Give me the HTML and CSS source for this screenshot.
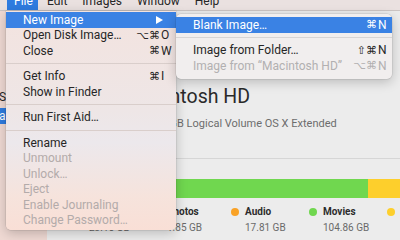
FILE: index.html
```html
<!DOCTYPE html>
<html lang="en">
<head>
    <meta charset="utf-8">
    <link rel="stylesheet" href="styles.css">
</head>
<body>
<div class="screen">
    <div class="menubar">
        <span class="on">File</span>
        <span>Edit</span>
        <span>Images</span>
        <span>Window</span>
        <span>Help</span>
    </div>
    <div class="window">
        <div class="sidebar">
            <div class="side-item">Si</div>
            <div class="side-item sel">a</div>
        </div>
        <div class="pane">
            <div class="head">
                <div class="disk-icon"></div>
                <div class="head-text">
                    <h1>Macintosh HD</h1>
                    <p>500.07 GB Logical Volume OS X Extended</p>
                </div>
            </div>
            <div class="rule"></div>
            <div class="bar">
                <div class="seg blue" style="width:40px"></div>
                <div class="seg orange" style="width:30px"></div>
                <div class="seg green" style="width:223px"></div>
                <div class="seg yellow" style="width:60px"></div>
            </div>
            <div class="legend">
                <div class="item">
                    <i class="dot blue"></i>
                    <div><b>Apps</b><span>23.15 GB</span></div>
                </div>
                <div class="item">
                    <i class="dot orange"></i>
                    <div><b>Photos</b><span>1.85 GB</span></div>
                </div>
                <div class="item">
                    <i class="dot orange"></i>
                    <div><b>Audio</b><span>17.81 GB</span></div>
                </div>
                <div class="item">
                    <i class="dot green"></i>
                    <div><b>Movies</b><span>104.86 GB</span></div>
                </div>
                <div class="item">
                    <i class="dot yellow"></i>
                    <div><b>Other</b><span>90.12 GB</span></div>
                </div>
            </div>
        </div>
    </div>

    <!-- File menu -->
    <div class="menu file-menu">
        <div class="row hl"><span class="label">New Image</span><i class="arrow"></i></div>
        <div class="row"><span class="label">Open Disk Image&hellip;</span><span class="mods">&#x2325;&#x2318;</span><span class="key">O</span></div>
        <div class="row"><span class="label">Close</span><span class="mods">&#x2318;</span><span class="key">W</span></div>
        <div class="sep"></div>
        <div class="row"><span class="label">Get Info</span><span class="mods">&#x2318;</span><span class="key">I</span></div>
        <div class="row"><span class="label">Show in Finder</span></div>
        <div class="sep"></div>
        <div class="row"><span class="label">Run First Aid&hellip;</span></div>
        <div class="sep"></div>
        <div class="row"><span class="label">Rename</span></div>
        <div class="row off"><span class="label">Unmount</span></div>
        <div class="row off"><span class="label">Unlock&hellip;</span></div>
        <div class="row off"><span class="label">Eject</span></div>
        <div class="row off"><span class="label">Enable Journaling</span></div>
        <div class="row off"><span class="label">Change Password&hellip;</span></div>
    </div>

    <!-- New Image submenu -->
    <div class="menu sub-menu">
        <div class="row hl"><span class="label">Blank Image&hellip;</span><span class="mods">&#x2318;</span><span class="key">N</span></div>
        <div class="sep"></div>
        <div class="row"><span class="label">Image from Folder&hellip;</span><span class="mods">&#x21E7;&#x2318;</span><span class="key">N</span></div>
        <div class="row off"><span class="label">Image from &ldquo;Macintosh HD&rdquo;</span><span class="mods">&#x2325;&#x2318;</span><span class="key">N</span></div>
    </div>
</div>
</body>
</html>
```

FILE: styles.css
```css
* {
    margin: 0;
    padding: 0;
    box-sizing: border-box;
}
body {
    font-family: Roboto, "DejaVu Sans", sans-serif;
    color: #262626;
    background: #ececec;
}
.screen {
    position: relative;
    width: 400px;
    height: 240px;
    overflow: hidden;
}

/* menu bar */
.menubar {
    display: flex;
    gap: 15px;
    height: 11px;
    overflow: hidden;
    padding-left: 7px;
    background: #eae1e0;
    border-bottom: 1px solid #cbc4c3;
    font-size: 12px;
}
.menubar span {
    line-height: 11px;
    margin-top: -4px;
    padding-bottom: 4px;
}
.menubar span.on {
    width: 31px;
    margin-right: -6px;
    padding-left: 7px;
    background-color: #2f7ce0;
    color: #fff;
}

/* window behind */
.window {
    display: flex;
    height: 229px;
}
.sidebar {
    flex: none;
    width: 47px;
    padding-top: 78px;
    background: #efd9d3;
    font-size: 12px;
}
.side-item {
    height: 16px;
    line-height: 16px;
    margin-left: -1px;
    margin-bottom: 3px;
}
.side-item.sel {
    background-color: #2f7ce0;
    color: #fff;
}
.pane {
    flex: 1;
    min-width: 0;
    padding: 74px 0 0 28px;
    background: #ececec;
}
.head {
    display: flex;
    gap: 10px;
}
.disk-icon {
    width: 42px;
    height: 34px;
    background: #c8c8c8;
    border-radius: 4px;
}
.head h1 {
    font-size: 19.5px;
    font-weight: 400;
    line-height: 24px;
    color: #2a2a2a;
}
.head p {
    margin-top: 8px;
    padding-left: 6px;
    font-size: 11px;
    line-height: 14px;
    color: #6d6d6d;
}
.rule {
    height: 1px;
    margin-top: 27px;
    background: #d6d6d6;
}
.bar {
    display: flex;
    height: 19px;
    margin-top: 20px;
    background: #fdcf2c;
}
.seg {
    flex: none;
    height: 100%;
}
.blue {
    background-color: #3f8ff0;
}
.orange {
    background-color: #f9a226;
}
.green {
    background-color: #70d74f;
}
.yellow {
    background-color: #fdcf2c;
}
.legend {
    display: flex;
    margin-top: 7px;
}
.item {
    display: flex;
    flex: none;
    width: 78px;
    gap: 6px;
}
.dot {
    flex: none;
    width: 8px;
    height: 8px;
    margin-top: 3px;
    border-radius: 50%;
}
.item b {
    display: block;
    font-size: 10px;
    line-height: 14px;
    color: #2c2c2c;
}
.item span {
    display: block;
    margin-top: 2px;
    font-size: 10px;
    line-height: 14px;
    color: #6a6a6a;
}

/* menus */
.menu {
    position: absolute;
    font-size: 12px;
    box-shadow: 0 3px 12px rgba(0,0,0,.22), 0 0 0 .5px rgba(0,0,0,.12);
}
.file-menu {
    left: 6px;
    top: 11px;
    width: 170px;
    padding: 1px 0 2px;
    border-radius: 0 0 5px 5px;
    background: linear-gradient(180deg, #f3e3df 0%, #eee6e6 45%, #ece8ec 60%, #f6e3dc 85%, #f9dfd6 100%);
}
.sub-menu {
    left: 176px;
    top: 14px;
    width: 216px;
    padding: 3px 0 5px;
    border-radius: 5px;
    background: #f1eeee;
}
.row {
    display: flex;
    align-items: center;
    height: 15.5px;
    padding: 0 4px 0 17px;
}
.sub-menu .row {
    padding-right: 3px;
}
.row.hl {
    background-color: #3a82e4;
    color: #fff;
}
.row.off {
    color: #b3abaa;
}
.sub-menu .row.off {
    color: #b2b0b1;
}
.label {
    flex: 1;
    white-space: nowrap;
}
.mods {
    font-family: "DejaVu Sans", sans-serif;
    font-size: 11px;
}
.key {
    width: 12px;
    padding-left: 1px;
}
.arrow {
    width: 0;
    height: 0;
    margin-right: 9px;
    border-top: 4px solid transparent;
    border-bottom: 4px solid transparent;
    border-left: 7px solid #fff;
}
.sep {
    height: 10px;
    padding-top: 4.5px;
}
.sep::after {
    content: "";
    display: block;
    height: 1px;
    background: #d9cecb;
}
.sub-menu .sep::after {
    background: #d7d5d5;
}
```
